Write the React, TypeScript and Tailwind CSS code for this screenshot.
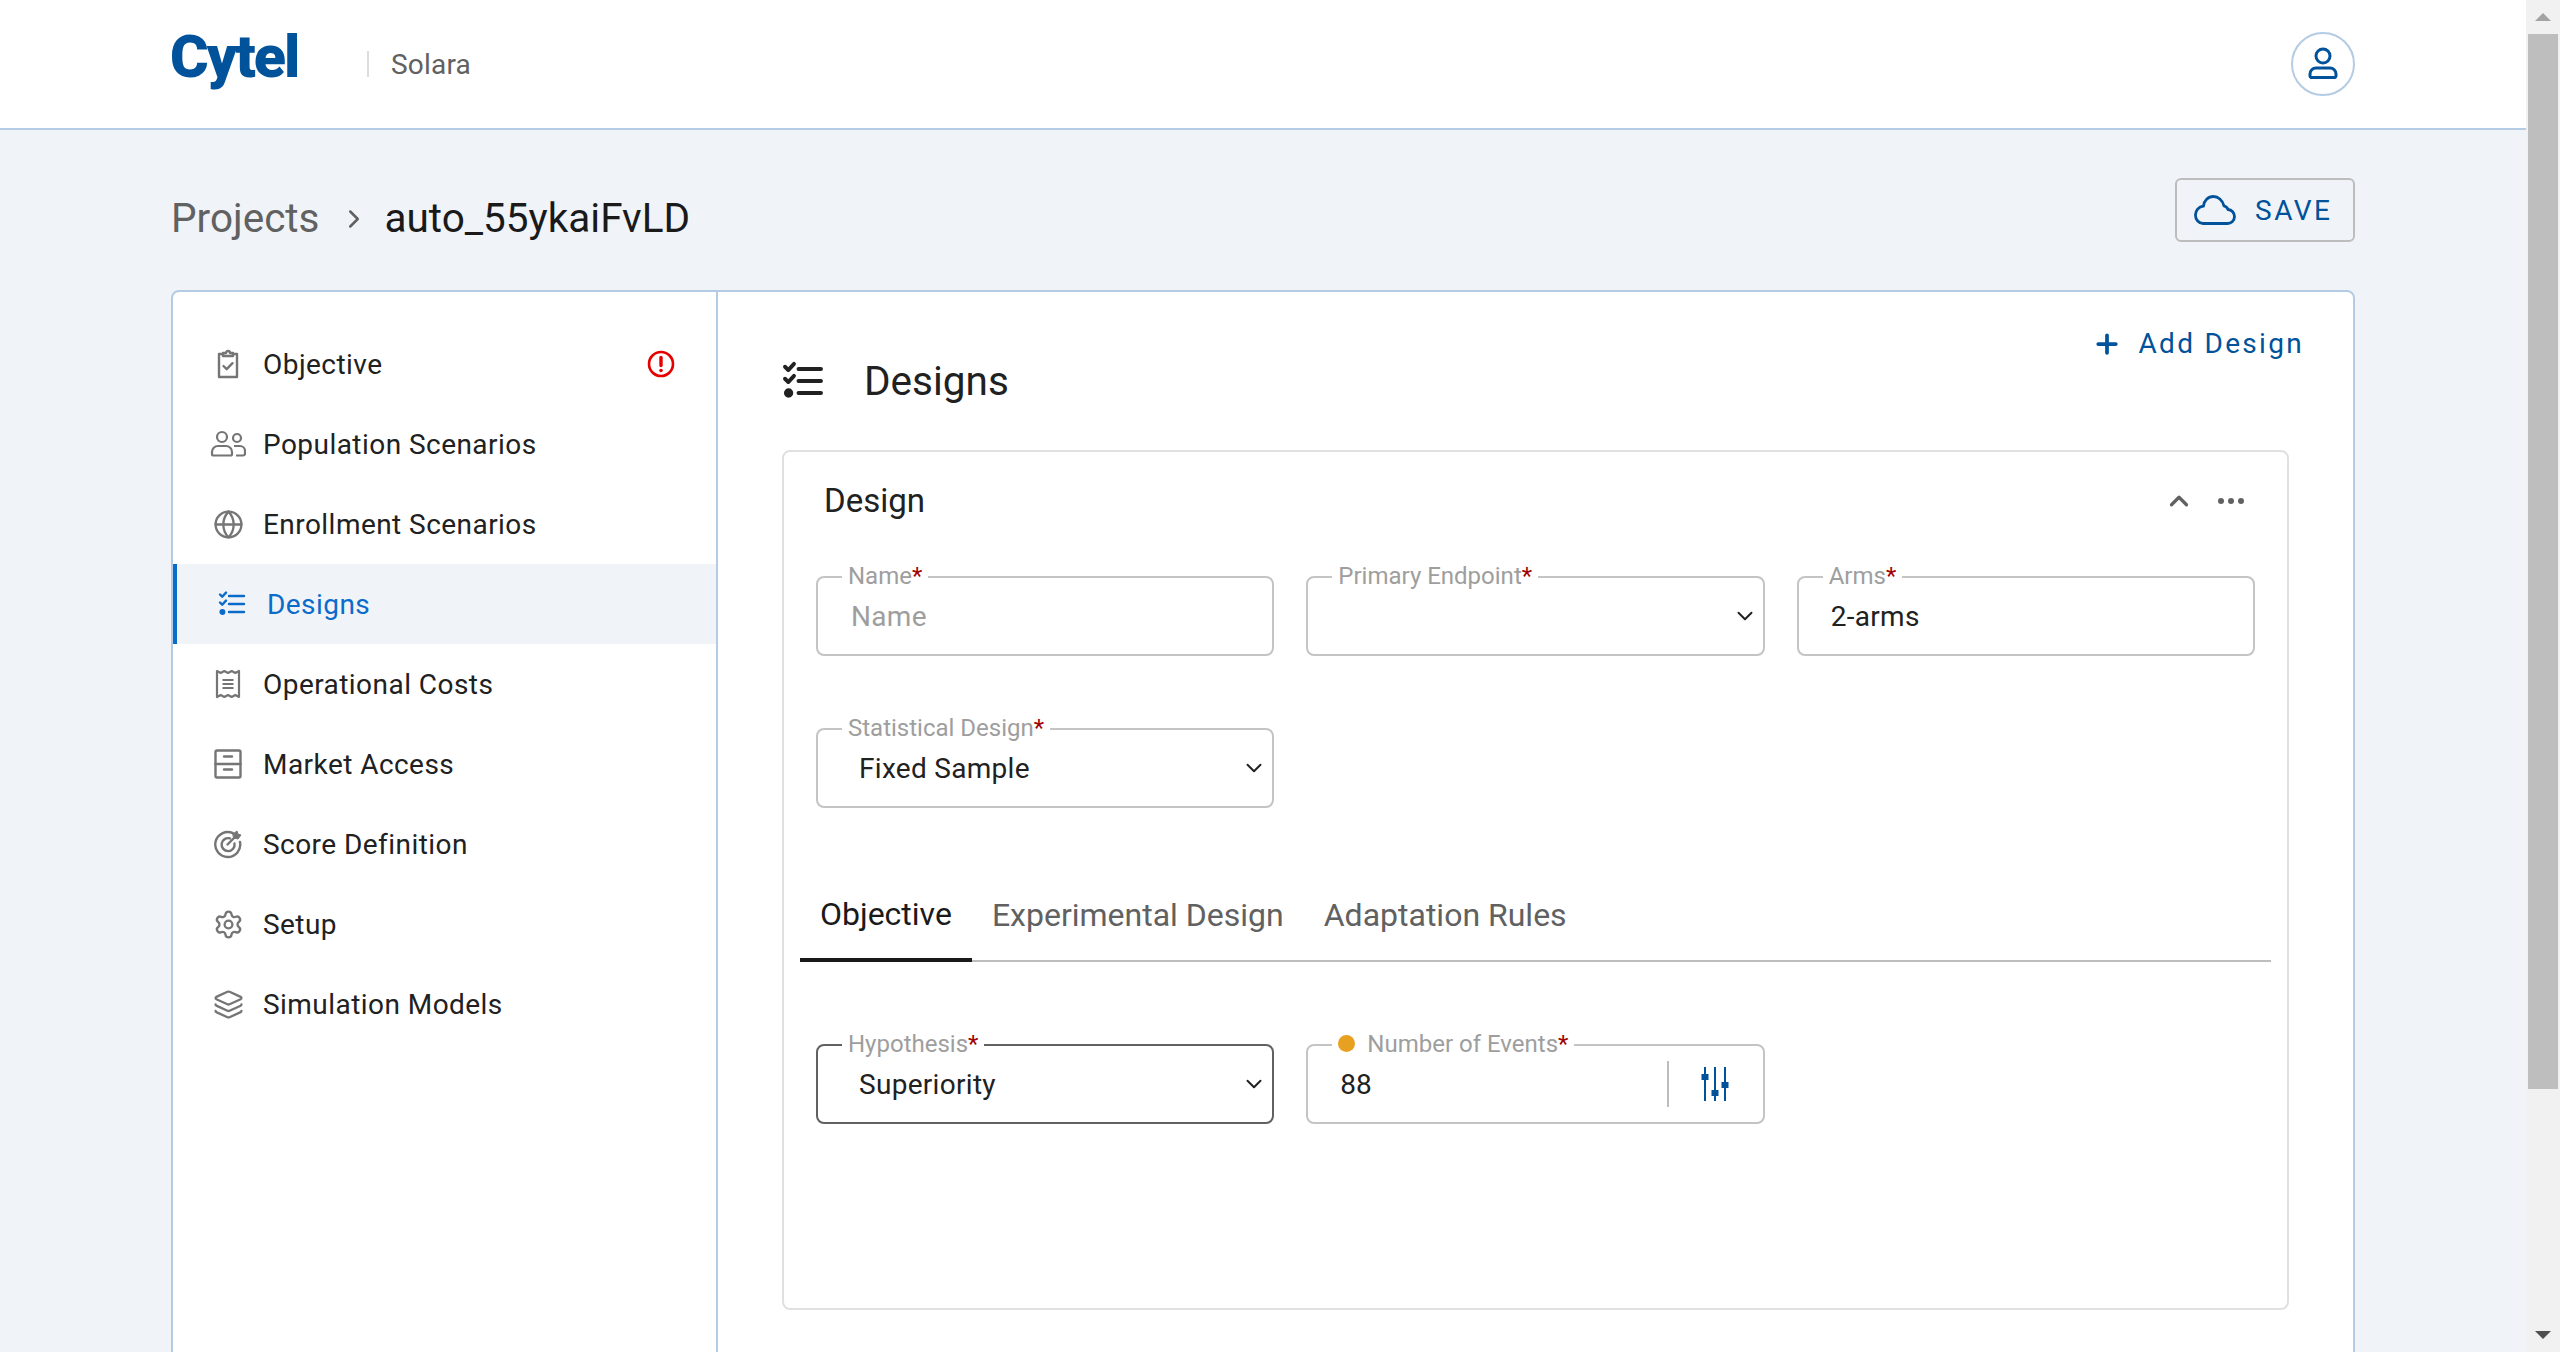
import { ChevronDown, ChevronRight, ChevronUp, Globe, Layers, Plus, Settings } from "lucide-react"
import type { ReactNode } from "react"

function ClipboardIcon() {
  return (
    <svg width="28" height="30" viewBox="0 0 28 30" fill="none" stroke="currentColor" strokeWidth="2.4" strokeLinejoin="round" strokeLinecap="round" className="max-w-none shrink-0">
      <path d="M9 5H5v23h18V5h-4" />
      <path d="M9 7V4h3a2 2 0 0 1 4 0h3v3z" />
      <path d="M9.5 17l3.2 3.2 5.8-6" />
    </svg>
  )
}

function PeopleIcon() {
  return (
    <svg width="36" height="28" viewBox="0 0 36 28" fill="none" stroke="currentColor" strokeWidth="2.2" className="max-w-none shrink-0">
      <circle cx="12" cy="7" r="5" />
      <circle cx="27" cy="8" r="4" />
      <path d="M2 24v-2a6 6 0 0 1 6-6h8a6 6 0 0 1 6 6v2a1.5 1.5 0 0 1-1.5 1.5h-17A1.5 1.5 0 0 1 2 24z" />
      <path d="M24 16h6a5 5 0 0 1 5 5v2.5a2 2 0 0 1-2 2h-7" />
    </svg>
  )
}

function ChecklistIcon({ size = 28, width = 2.4 }: { size?: number; width?: number }) {
  return (
    <svg width={size} height={size} viewBox="0 0 28 28" fill="none" stroke="currentColor" strokeWidth={width} strokeLinecap="round" strokeLinejoin="round" className="max-w-none shrink-0">
      <path d="M11 6h15M11 14h15M11 22h15" />
      <path d="M2 4.5l2.2 2.2L8 2.6M2 12.5l2.2 2.2L8 10.6" />
      <circle cx="4.4" cy="22" r="1.8" fill="currentColor" />
    </svg>
  )
}

function ReceiptIcon() {
  return (
    <svg width="28" height="30" viewBox="0 0 28 30" fill="none" stroke="currentColor" strokeWidth="2.2" strokeLinejoin="round" className="max-w-none shrink-0">
      <path d="M3 2l3.7 2 3.6-2 3.7 2 3.7-2 3.6 2L25 2v26l-3.7-2-3.6 2-3.7-2-3.7 2-3.6-2L3 28z" />
      <path d="M8.5 11h11M8.5 15h11M8.5 19h11" />
    </svg>
  )
}

function DrawerIcon() {
  return (
    <svg width="28" height="30" viewBox="0 0 28 30" fill="none" stroke="currentColor" strokeWidth="2.4" strokeLinejoin="round" strokeLinecap="round" className="max-w-none shrink-0">
      <rect x="1.5" y="1.5" width="25" height="27" rx="1.5" />
      <path d="M1.5 15h25M10 7.5h8M10 20.5h8" />
    </svg>
  )
}

function TargetIcon() {
  return (
    <svg width="28" height="30" viewBox="0 0 28 30" fill="none" stroke="currentColor" strokeWidth="2.4" strokeLinecap="round" className="max-w-none shrink-0">
      <path d="M19 4.2A12.5 12.5 0 1 0 26 13" />
      <path d="M16 9.4A6.5 6.5 0 1 0 20.5 14.5" />
      <path d="M13.5 15.5l7-7" />
      <path d="M19 5l4-3 1 3 3 1-3 4-4-1z" fill="currentColor" strokeWidth="1" />
    </svg>
  )
}

function CloudIcon() {
  return (
    <svg width="42" height="30" viewBox="0 0 42 30" fill="none" stroke="currentColor" strokeWidth="2.8" strokeLinejoin="round" className="max-w-none shrink-0">
      <path d="M9 28.5h24.5a7 7 0 0 0 7-7 7 7 0 0 0-6.5-7c-.5-1.5-1.8-3-4-3.6C28.5 5 24 1.5 19.5 1.5 14 1.5 10 5.5 9.5 11A9 9 0 0 0 1.5 20.5 8 8 0 0 0 9 28.5z" />
    </svg>
  )
}

function SlidersIcon() {
  return (
    <svg width="30" height="34" viewBox="0 0 30 34" fill="currentColor" className="max-w-none shrink-0">
      <rect x="5" y="0" width="2" height="34" />
      <rect x="15" y="0" width="2" height="34" />
      <rect x="25" y="0" width="2" height="34" />
      <rect x="2.5" y="7" width="7" height="6" />
      <rect x="12.5" y="23" width="7" height="6" />
      <rect x="22.5" y="15" width="7" height="6" />
    </svg>
  )
}

function UserIcon() {
  return (
    <svg width="30" height="34" viewBox="0 0 30 34" fill="none" stroke="currentColor" strokeWidth="3" className="max-w-none shrink-0">
      <circle cx="15" cy="9" r="7" />
      <path d="M2 29v-2a6 6 0 0 1 6-6h14a6 6 0 0 1 6 6v2a2 2 0 0 1-1 1.5H3A2 2 0 0 1 2 29z" strokeLinejoin="round" />
    </svg>
  )
}

function AlertIcon() {
  return (
    <svg width="28" height="28" viewBox="0 0 28 28" fill="none" stroke="currentColor" strokeWidth="2.6" strokeLinecap="round">
      <circle cx="14" cy="14" r="12" />
      <path d="M14 7.5v8" strokeWidth="3.4" />
      <circle cx="14" cy="20.5" r="1.8" fill="currentColor" stroke="none" />
    </svg>
  )
}

const navItems: { label: string; icon: ReactNode; active?: boolean; alert?: boolean }[] = [
  { label: "Objective", icon: <ClipboardIcon />, alert: true },
  { label: "Population Scenarios", icon: <PeopleIcon /> },
  { label: "Enrollment Scenarios", icon: <Globe size={31} strokeWidth={1.8} className="max-w-none shrink-0" /> },
  { label: "Designs", icon: <ChecklistIcon />, active: true },
  { label: "Operational Costs", icon: <ReceiptIcon /> },
  { label: "Market Access", icon: <DrawerIcon /> },
  { label: "Score Definition", icon: <TargetIcon /> },
  { label: "Setup", icon: <Settings size={31} strokeWidth={1.8} className="max-w-none shrink-0" /> },
  { label: "Simulation Models", icon: <Layers size={31} strokeWidth={1.8} className="max-w-none shrink-0" /> },
]

function NavRow({ label, icon, active, alert }: { label: string; icon: ReactNode; active?: boolean; alert?: boolean }) {
  return (
    <div className={active ? "flex h-20 items-center border-l-4 border-[#0b6bcb] bg-[#f0f4f8] pl-[41px] text-[#0b6bcb]" : "flex h-20 items-center pl-[41px] text-[#212121]"}>
      <span className={active ? "flex w-[28px] justify-center" : "flex w-[28px] justify-center text-[#757575]"}>{icon}</span>
      <span className="ml-[21px] pt-[2px] text-[28px] tracking-[0.45px]">{label}</span>
      {alert && (
        <span className="ml-auto mr-[41px] text-[#e60000]">
          <AlertIcon />
        </span>
      )}
    </div>
  )
}

function Field({ label, dark, dot, children }: { label: string; dark?: boolean; dot?: boolean; children: ReactNode }) {
  return (
    <div className={dark ? "relative h-20 rounded-lg border-2 border-[#616161]" : "relative h-20 rounded-lg border-2 border-[#c4c4c4]"}>
      <div className="absolute -top-[17px] left-[24px] flex items-center bg-white px-[6px] text-[24px] leading-[30px] text-[#9e9e9e]">
        {dot && <span className="-mt-[2px] mr-[12px] h-[17px] w-[17px] rounded-full bg-[#e8a020]" />}
        <span>{label}</span>
        <span className="text-[#a00000]">*</span>
      </div>
      {children}
    </div>
  )
}

function SelectValue({ value }: { value?: string }) {
  return (
    <div className="flex h-full items-center justify-between pl-[41px] pr-[5px] text-[28px] tracking-[0.3px] text-[#212121]">
      <span className="pt-[2px]">{value}</span>
      <ChevronDown size={26} strokeWidth={1.8} />
    </div>
  )
}

function InputValue({ value, placeholder }: { value: string; placeholder?: boolean }) {
  return (
    <div className={placeholder ? "flex h-full items-center pl-[33px] pt-[2px] text-[28px] tracking-[0.3px] text-[#9e9e9e]" : "flex h-full items-center pl-[32px] pt-[2px] text-[28px] tracking-[0.3px] text-[#212121]"}>
      {value}
    </div>
  )
}

export default function App() {
  return (
    <div className="flex h-[1352px] overflow-hidden bg-[#f0f4f8] font-['Roboto',sans-serif]">
      <div className="min-w-0 flex-1">
        <header className="flex h-[130px] items-center border-b-2 border-[#b3cbe3] bg-white pl-[170px] pr-[171px]">
          <div className="-mt-[15px] w-[197px] origin-left scale-x-[0.985] text-[60px] font-black leading-none tracking-[-2px] text-[#00529b]">Cytel</div>
          <div className="h-[26px] w-[2px] bg-[#dcdcdc]" />
          <div className="ml-[22px] pt-[2px] text-[28px] tracking-[0.2px] text-[#616161]">Solara</div>
          <div className="ml-auto flex h-16 w-16 items-center justify-center rounded-full border-2 border-[#b3cbe3] text-[#00529b]">
            <UserIcon />
          </div>
        </header>

        <main className="pl-[171px] pr-[171px]">
          <div className="flex h-[160px] items-center justify-between">
            <div className="flex items-center pt-[17px] text-[40.5px]">
              <span className="text-[#616161]">Projects</span>
              <ChevronRight size={30} strokeWidth={2} className="ml-[19px] mr-[16px] text-[#616161]" />
              <span className="text-[#1a1a1a]">auto_55ykaiFvLD</span>
            </div>
            <div className="flex h-16 w-[180px] items-center rounded-md border-2 border-[#bdbdbd] pl-[17px] text-[#00529b]">
              <CloudIcon />
              <span className="ml-[19px] pt-[1px] text-[28px] tracking-[2.5px]">SAVE</span>
            </div>
          </div>

          <section className="flex h-[1100px] rounded-lg border-2 border-[#b3cbe3] bg-white">
            <nav className="w-[545px] shrink-0 border-r-2 border-[#b3cbe3] pt-8">
              {navItems.map((item) => (
                <NavRow key={item.label} {...item} />
              ))}
            </nav>

            <div className="min-w-0 flex-1 px-16">
              <div className="flex h-[158px] items-start justify-between">
                <div className="mt-[66px] flex items-center text-[#212121]">
                  <ChecklistIcon size={42} width={2.6} />
                  <span className="ml-[40px] text-[40.5px] leading-[46px]">Designs</span>
                </div>
                <div className="-mr-[15px] mt-[32px] flex h-10 items-center text-[#00529b]">
                  <Plus size={30} strokeWidth={3} />
                  <span className="ml-[17px] text-[28px] tracking-[2.3px]">Add Design</span>
                </div>
              </div>

              <div className="h-[860px] rounded-lg border-2 border-[#e0e0e0] px-8">
                <div className="mb-[30px] flex h-[94px] items-center justify-between pl-2 pr-[10px] pt-[4px] text-[#616161]">
                  <span className="text-[33px] text-[#212121]">Design</span>
                  <div className="flex items-center">
                    <ChevronUp size={30} strokeWidth={2.6} />
                    <svg width="28" height="8" viewBox="0 0 28 8" fill="currentColor" className="ml-[23px]">
                      <circle cx="4" cy="4" r="3" />
                      <circle cx="14" cy="4" r="3" />
                      <circle cx="24" cy="4" r="3" />
                    </svg>
                  </div>
                </div>

                <div className="grid grid-cols-3 gap-x-8 gap-y-[72px]">
                  <Field label="Name">
                    <InputValue value="Name" placeholder />
                  </Field>
                  <Field label="Primary Endpoint">
                    <SelectValue />
                  </Field>
                  <Field label="Arms">
                    <InputValue value="2-arms" />
                  </Field>
                  <Field label="Statistical Design">
                    <SelectValue value="Fixed Sample" />
                  </Field>
                </div>

                <div className="-mx-4 mt-[74px] flex h-20 border-b-2 border-[#bdbdbd] text-[32px] text-[#616161]">
                  <div className="-mb-[2px] flex items-center border-b-4 border-[#1a1a1a] px-5 pb-[13px] text-[#1a1a1a]">Objective</div>
                  <div className="flex items-center px-5 pb-[13px]">Experimental Design</div>
                  <div className="flex items-center px-5 pb-[13px]">Adaptation Rules</div>
                </div>

                <div className="mt-[82px] grid grid-cols-3 gap-x-8">
                  <Field label="Hypothesis" dark>
                    <SelectValue value="Superiority" />
                  </Field>
                  <Field label="Number of Events" dot>
                    <div className="flex h-full items-center pl-[32px] pr-[34px] text-[28px] text-[#212121]">
                      <span className="pt-[2px]">88</span>
                      <span className="ml-auto h-[46px] w-[2px] bg-[#bdbdbd]" />
                      <span className="ml-[30px] text-[#00529b]">
                        <SlidersIcon />
                      </span>
                    </div>
                  </Field>
                </div>
              </div>
            </div>
          </section>
        </main>
      </div>

      <div className="flex w-[34px] shrink-0 flex-col items-center bg-[#f1f1f1]">
        <div className="flex h-[34px] items-center justify-center">
          <div className="h-0 w-0 border-x-8 border-b-8 border-x-transparent border-b-[#a3a3a3]" />
        </div>
        <div className="h-[1055px] w-[30px] bg-[#bebebe]" />
        <div className="mt-auto flex h-[34px] items-center justify-center">
          <div className="h-0 w-0 border-x-8 border-t-8 border-x-transparent border-t-[#505050]" />
        </div>
      </div>
    </div>
  )
}
